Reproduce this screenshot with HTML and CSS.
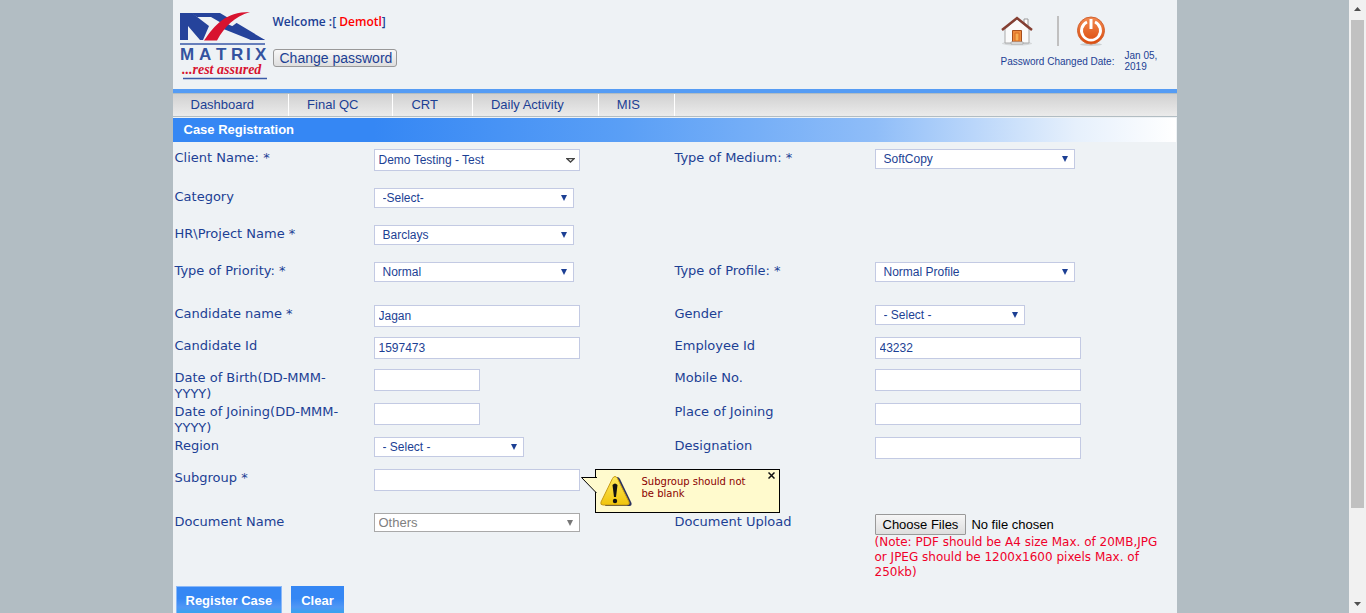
FILE: index.html
```html
<!DOCTYPE html>
<html lang="en">
<head>
<meta charset="utf-8">
<title>Case Registration</title>
<link rel="stylesheet" href="styles.css">
</head>
<body>
<div class="viewport">
  <div class="page">
    <header class="header">
      <svg class="logo" viewBox="0 0 90 72" width="90" height="72" role="img" aria-label="Matrix, rest assured">
        <path d="M1 29V2h12l17 13-6 14h-3L9 15v14z" fill="#25439b"/>
        <path d="M12 2h29l45 27H72L32 6H18z" fill="#25439b"/>
        <path d="M40 16 53 2h18L44 22z" fill="#eef2f5"/>
        <path d="M46 12l40 17H72L42 17z" fill="#25439b"/>
        <path d="M25 29.500C36 14 46 1 71 1 55 6 46 15 38 29.500z" fill="#d8132f"/>
        <path d="M1 33h85M4 67.500h84" stroke="#3b5aa8" stroke-width="1.500"/>
        <text class="logo-name" x="1 20 37 52 67 76" y="49">MATRIX</text>
        <text class="logo-tag" x="3" y="63">...rest assured</text>
      </svg>
      <div class="account">
        <p class="welcome">Welcome :[ <span class="user">Demotl</span>]</p>
        <button class="password-button" type="button">Change password</button>
      </div>
      <div class="tools">
        <div class="tool-icons">
          <a href="#" aria-label="Home"><svg viewBox="0 0 32 30" width="32" height="30">
            <ellipse cx="16" cy="27.500" rx="15" ry="2" fill="#d5d8da"/>
            <path d="M23 3h4v8h-4z" fill="#fff" stroke="#999"/>
            <path d="M4 13 16 3l12 10v14H4z" fill="#fafafa" stroke="#aaa"/>
            <path d="M1 14 16 2l15 12" fill="none" stroke="#853f32" stroke-width="2.500"/>
            <path d="M11.500 14.500h9V26h-9z" fill="#ef8b3c" stroke="#a64f1d"/>
            <path d="M14 17h4v8h-4z" fill="#f7ad52" stroke="#d96a20"/>
            <path d="M10 26h12v2H10z" fill="#fff" stroke="#aaa"/>
          </svg></a>
          <span class="tool-divider"></span>
          <a href="#" aria-label="Log out"><svg viewBox="0 0 30 30" width="30" height="30">
            <defs><linearGradient id="power" x1="0" y1="0" x2="0" y2="1"><stop stop-color="#f28a51"/><stop offset="1" stop-color="#db4a0b"/></linearGradient></defs>
            <ellipse cx="15" cy="28.500" rx="11" ry="1.500" fill="#ccd0d2"/>
            <circle cx="15" cy="14.500" r="13.500" fill="url(#power)" stroke="#d2622f"/>
            <path d="M11 6a9.500 9.500 0 1 0 8 0" fill="none" stroke="#fff" stroke-width="2.800"/>
            <path d="M15 3v10" stroke="#fff" stroke-width="3"/>
          </svg></a>
        </div>
        <div class="changed"><span>Password Changed Date:</span><span class="changed-date">Jan 05, 2019</span></div>
      </div>
    </header>
    <nav class="nav">
      <a href="#">Dashboard</a><a href="#">Final QC</a><a href="#">CRT</a><a href="#">Daily Activity</a><a href="#">MIS</a>
    </nav>
    <h1 class="title">Case Registration</h1>
    <form class="form">
      <div class="row row-select">
        <label for="client">Client Name: *</label>
        <div><input id="client" class="field combo" type="text" value="Demo Testing - Test"></div>
        <label for="medium">Type of Medium: *</label>
        <div><select id="medium" class="field select"><option>SoftCopy</option></select></div>
      </div>
      <div class="row row-select">
        <label for="category">Category</label>
        <div><select id="category" class="field select"><option>-Select-</option></select></div>
      </div>
      <div class="row row-select">
        <label for="project">HR\Project Name *</label>
        <div><select id="project" class="field select"><option>Barclays</option></select></div>
      </div>
      <div class="row row-spaced">
        <label for="priority">Type of Priority: *</label>
        <div><select id="priority" class="field select"><option>Normal</option></select></div>
        <label for="profile">Type of Profile: *</label>
        <div><select id="profile" class="field select"><option>Normal Profile</option></select></div>
      </div>
      <div class="row">
        <label for="name">Candidate name *</label>
        <div><input id="name" class="field" type="text" value="Jagan"></div>
        <label for="gender">Gender</label>
        <div><select id="gender" class="field select short"><option>- Select -</option></select></div>
      </div>
      <div class="row">
        <label for="cid">Candidate Id</label>
        <div><input id="cid" class="field" type="text" value="1597473"></div>
        <label for="eid">Employee Id</label>
        <div><input id="eid" class="field" type="text" value="43232"></div>
      </div>
      <div class="row row-date">
        <label for="dob">Date of Birth(DD-MMM-YYYY)</label>
        <div><input id="dob" class="field date" type="text"></div>
        <label for="mobile">Mobile No.</label>
        <div><input id="mobile" class="field" type="text"></div>
      </div>
      <div class="row row-date">
        <label for="doj">Date of Joining(DD-MMM-YYYY)</label>
        <div><input id="doj" class="field date" type="text"></div>
        <label for="place">Place of Joining</label>
        <div><input id="place" class="field" type="text"></div>
      </div>
      <div class="row">
        <label for="region">Region</label>
        <div><select id="region" class="field select short"><option>- Select -</option></select></div>
        <label for="designation">Designation</label>
        <div><input id="designation" class="field" type="text"></div>
      </div>
      <div class="row row-subgroup">
        <label for="subgroup">Subgroup *</label>
        <div class="anchor">
          <input id="subgroup" class="field" type="text">
          <div class="callout" role="alert">
            <svg class="callout-tail" viewBox="0 0 16 17" width="16" height="17"><path d="M16 .500H.500L15.500 16" fill="#fffacd" stroke="#000"/></svg>
            <svg class="warning" viewBox="0 0 32 32" width="32" height="32">
              <defs><linearGradient id="warn" x1="0" y1="0" x2="0" y2="1"><stop stop-color="#ffe95c"/><stop offset="1" stop-color="#f0c40c"/></linearGradient></defs>
              <path d="M17 2q2 0 3 2l11.500 24q.500 3-2 3H5z" fill="#2b3260"/>
              <path d="M15 1.500q1.500 0 2.500 2L29 27q1 3-2 3H3q-3 0-2-3L12.500 3.500q1-2 2.500-2z" fill="url(#warn)" stroke="#c79a14"/>
              <path d="M12.500 10q2.500-3 5 0L16 22h-2z" fill="#111"/><circle cx="15" cy="26" r="2.200" fill="#111"/>
            </svg>
            <p class="callout-text">Subgroup should not be blank</p>
            <button class="callout-close" type="button" aria-label="Close"><svg viewBox="0 0 7 7" width="7" height="7"><path d="M.500.500l6 6M6.500.500l-6 6" stroke="#111" stroke-width="1.500"/></svg></button>
          </div>
        </div>
      </div>
      <div class="row row-upload">
        <label for="document">Document Name</label>
        <div><select id="document" class="field others" disabled><option>Others</option></select></div>
        <label for="upload">Document Upload</label>
        <div><input id="upload" class="upload" type="file" multiple>
        <p class="note">(Note: PDF should be A4 size Max. of 20MB,JPG or JPEG should be 1200x1600 pixels Max. of 250kb)</p></div>
      </div>
      <div class="actions">
        <button class="action focused" type="button">Register Case</button>
        <button class="action" type="reset">Clear</button>
      </div>
    </form>
  </div>
</div>
<div class="scrollbar" aria-hidden="true">
  <svg viewBox="0 0 7 4" width="7" height="4"><path d="M0 4 3.500 0 7 4z" fill="#505050"/></svg>
  <span class="thumb"></span>
  <svg viewBox="0 0 7 4" width="7" height="4"><path d="M0 0h7L3.500 4z" fill="#505050"/></svg>
</div>
</body>
</html>
```
FILE: styles.css
```css
* { box-sizing: border-box; }

body {
  margin: 0;
  display: flex;
  height: 100vh;
  overflow: hidden;
  background: #b2bdc3;
  color: #1c3f94;
  font-family: "Liberation Sans", Arial, sans-serif;
}

p, h1 { margin: 0; }
a { color: inherit; text-decoration: none; }
svg { display: block; }

.viewport { flex: 1; overflow: hidden; }
.page {
  max-width: 1004px;
  min-height: 100%;
  margin: 0 auto;
  background: #eef2f5;
}

.header {
  display: flex;
  height: 93px;
  padding: 11px 16px 0 6px;
  border-bottom: 4px solid #559cf4;
}
.logo-name { font: 700 17px "Liberation Sans", sans-serif; fill: #34539f; }
.logo-tag { font: italic 700 14px "Liberation Serif", serif; fill: #d8132f; }
.account { padding: 2px 0 0 4px; }
.welcome { font: 600 12px/18px "Open Sans", sans-serif; }
.user { color: #f00; }
.password-button {
  display: block;
  margin-top: 18px;
  height: 18px;
  padding: 0 4px 0 6px;
  border: 1px solid #999;
  border-radius: 3px;
  background: linear-gradient(#f8f8f8, #dedede);
  color: #1c3f94;
  font: 14px/14px "Liberation Sans", Arial, sans-serif;
}
.tools { margin-left: auto; width: 160px; padding-top: 5px; }
.tool-icons { display: flex; gap: 17px; }
.tool-icons a:first-child { margin-right: 7px; }
.tool-divider { width: 2px; height: 30px; background: #c0c0c0; }
.changed { display: flex; align-items: center; justify-content: space-between; gap: 8px; padding-top: 4px; font-size: 10px; line-height: 11px; white-space: nowrap; }
.changed-date { width: 36px; white-space: normal; }

.nav {
  display: flex;
  height: 24px;
  border-top: 1px solid #b2bdc3;
  border-bottom: 1px solid #b2bdc3;
  background: linear-gradient(#d1d1d1, #ebebeb);
}
.nav a { padding: 0 34px 0 18px; border-right: 1px solid #fff; font-size: 13px; line-height: 22px; }

.title {
  margin: 1px 1px 0 0;
  padding-left: 11px;
  background: linear-gradient(90deg, #3587f4 20%, #5a9ff6 45%, #8fbdf8 70%, #e6f0fc 90%, #fff);
  color: #fff;
  font-size: 13px;
  line-height: 24px;
}

.form { padding: 7px 0 0 1px; }
.row {
  display: grid;
  grid-template-columns: 200fr 300fr 201fr 302fr;
  align-items: start;
  min-height: 32px;
}
.row-select { min-height: 37px; }
.row-select:first-child { min-height: 39px; }
.row-spaced { min-height: 43px; }
.row-subgroup { min-height: 44px; }
.row-date { min-height: 34px; }
.row-upload { min-height: 73px; }
.row label { padding: 1px 16px 0 1px; font: 13px/16px Verdana, "DejaVu Sans", sans-serif; }

.field {
  display: block;
  width: 206px;
  height: 22px;
  margin: 0;
  padding: 0 4px;
  border: 1px solid #c3cae3;
  border-radius: 0;
  background: #fff;
  color: #1c3f94;
  font: 12px "Liberation Sans", Arial, sans-serif;
}
.select {
  appearance: none;
  width: 200px;
  height: 20px;
  padding: 0 8px;
  background: #fff url("data:image/svg+xml,%3Csvg xmlns='http://www.w3.org/2000/svg' width='6' height='6'%3E%3Cpath d='M0 0h6L3 6z' fill='%231c3f94'/%3E%3C/svg%3E") no-repeat right 6px center;
}
.short { width: 150px; }
.date { width: 106px; }
.combo {
  background: #fff url("data:image/svg+xml,%3Csvg xmlns='http://www.w3.org/2000/svg' width='9' height='5'%3E%3Cpath d='M1 .7h7L4.500 4z' fill='none' stroke='%23444' stroke-width='1.300'/%3E%3C/svg%3E") no-repeat right 4px center;
}
.others {
  appearance: none;
  height: 19px;
  border-color: #a9a9a9;
  color: #808080;
  font-size: 13px;
  opacity: 1;
  background: #fff url("data:image/svg+xml,%3Csvg xmlns='http://www.w3.org/2000/svg' width='6' height='6'%3E%3Cpath d='M0 0h6L3 6z' fill='%23777'/%3E%3C/svg%3E") no-repeat right 6px center;
}

.anchor { position: relative; }
.callout {
  position: absolute;
  top: 0;
  left: 221px;
  z-index: 1;
  display: flex;
  width: 185px;
  height: 44px;
  padding: 5px 4px;
  border: 1px solid #000;
  background: #fffacd;
}
.callout-tail { position: absolute; top: 7px; left: -15px; }
.callout-text { flex: 1; padding: 1px 20px 0 10px; color: #8b0000; font: 10px/12px Verdana, "DejaVu Sans", sans-serif; }
.callout-close { position: absolute; top: 2px; right: 4px; padding: 0; border: 0; background: none; }

.upload { display: block; height: 22px; padding-top: 1px; color: #000; font: 13px "Liberation Sans", Arial, sans-serif; }
.upload::file-selector-button {
  height: 21px;
  margin: 0 5px 0 0;
  padding: 0 7px;
  border: 1px solid #999;
  border-radius: 1px;
  background: linear-gradient(#f6f6f6, #dedede);
  color: #000;
  font: 13px "Liberation Sans", Arial, sans-serif;
}
.note { padding-right: 8px; color: #f0002a; font: 12px/15px Verdana, "DejaVu Sans", sans-serif; }

.actions { display: flex; gap: 9px; padding-left: 2px; }
.action {
  height: 28px;
  padding: 0 10px;
  border: 0;
  background: linear-gradient(#3587f4 45%, #5097f5 75%, #34a5ee);
  color: #fff;
  font: 700 13px "Liberation Sans", Arial, sans-serif;
}
.focused { box-shadow: inset 0 0 0 1px #8ab8f8; }

.scrollbar {
  display: flex;
  flex-direction: column;
  align-items: center;
  width: 17px;
  padding: 7px 0;
  background: #f1f1f1;
}
.thumb { width: 13px; height: 488px; margin: 9px 0 auto; background: #c1c1c1; }
```
